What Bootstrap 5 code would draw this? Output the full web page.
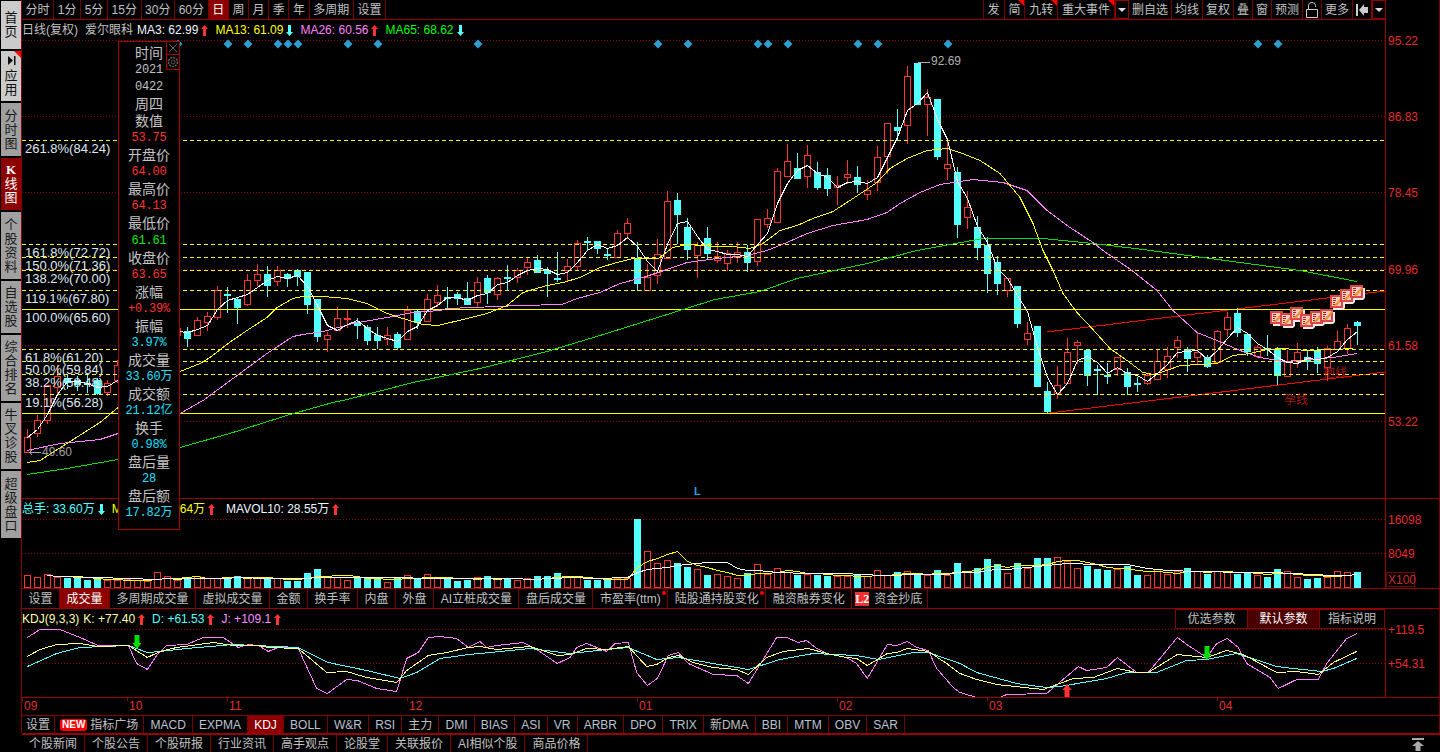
<!DOCTYPE html>
<html lang="zh">
<head>
    <meta charset="UTF-8">
    <title>爱尔眼科 K线图</title>
    <link href="https://cdn.jsdelivr.net/npm/bootstrap@5.3.2/dist/css/bootstrap.min.css" rel="stylesheet">
    <style>
        html, body { height: 100%; overflow: hidden; }
        body {
            background: #000;
            color: #c0c0c0;
            font-family: "Liberation Sans", "Noto Sans CJK SC", sans-serif;
            font-size: 12px;
            line-height: 1;
        }

        /* left rail */
        .side-rail { width: 21px; padding: 1px 0 0 1px; gap: 2px; }
        .rail-btn {
            width: 20px;
            background: #a0a0a0;
            color: #1a1a1a;
            font-size: 13px;
            line-height: 14px;
            position: relative;
            text-align: center;
        }
        .rail-btn > span.rail-text { display: block; width: 14px; word-break: break-all; }
        .rail-btn.rail-light { background: #cbcbcb; color: #111; }
        .rail-btn.rail-on { background: #8c0000; color: #fff; }
        .rail-kay { font-family: "Liberation Serif", serif; font-weight: 700; }
        .rail-home { height: 48px; }
        .rail-app { height: 50px; }
        .rail-time { height: 53px; }
        .rail-kline { height: 52px; }
        .rail-info { height: 67px; }
        .rail-fav { height: 52px; }
        .rail-rank { height: 66px; }
        .rail-diag { height: 66px; }
        .rail-super { height: 67px; }
        .rail-corner {
            position: absolute; top: 0; right: 0;
            border-top: 7px solid #f00; border-left: 7px solid transparent;
        }

        /* main column */
        .main-col { width: 1419px; border-left: 1px solid #800; border-right: 1px solid #700; height: 733px; }
        .top-bar { width: 1364px; height: 20px; border-bottom: 1px solid #900; }
        .tab-strip { display: flex; }
        .tab-cell {
            position: relative;
            display: flex; align-items: center; justify-content: center;
            border-right: 1px solid #700;
            color: #c0c0c0;
            white-space: nowrap;
        }
        .tab-cell.tab-on { background: #8c0000; color: #fff; }
        .strip-top .tab-cell { height: 19px; padding: 0 3.6px; }
        .strip-right .tab-cell { height: 19px; padding: 0 3px; }
        .strip-right .tab-cell.tab-wide { padding: 0 3.9px; }
        .strip-right { border-left: 1px solid #700; }
        .strip-right .tab-cell.tab-drop { border: 1px solid #900; width: 14px; padding: 0; }
        .tab-flag::after {
            content: ""; position: absolute; top: 0; right: 0;
            border-top: 6px solid #f00; border-left: 6px solid transparent;
        }
        .tab-dot::after {
            content: ""; position: absolute; top: 2px; right: 1px;
            width: 4px; height: 4px; border-radius: 50%; background: #f00;
        }
        .down-mark { width: 0; height: 0; border-top: 4px solid #ddd; border-left: 4px solid transparent; border-right: 4px solid transparent; }

        .chart-stack { position: relative; }
        .chart-pane { position: relative; width: 1418px; border-bottom: 1px solid #900; }
        .chart-pane svg, .axis-row svg { display: block; }
        .pane-price { height: 479px; }
        .pane-vol { height: 90px; }
        .pane-kdj { height: 89px; }
        .axis-row { height: 17px; }

        .legend-row { position: absolute; top: 0; left: 0; height: 20px; display: flex; align-items: center; white-space: nowrap; }
        .legend-row > span { display: inline-flex; align-items: center; margin-right: 7px; }
        .legend-row svg { margin-left: 3px; }
        .legend-row > .kdj-head { margin-right: 4px; }
        .legend-row > .vol-cut { margin-left: 58px; }
        .tone-white { color: #f0f4ff; }
        .tone-yellow { color: #ff0; }
        .tone-pink { color: #ff80ff; }
        .tone-green { color: #0f0; }
        .tone-cyan { color: #54ffff; }
        .tone-pale { color: #ffffa8; }
        .tone-lilac { color: #ff90ff; }
        .tone-gray { color: #c0c0c0; }

        /* floating data window */
        .data-tip {
            position: absolute; top: 21px; left: 96px;
            width: 62px; height: 489px;
            background: #000;
            border: 1px solid #a00;
            padding-top: 3px;
            text-align: center;
            line-height: 17px;
            z-index: 5;
        }
        .tip-name { font-size: 14px; color: #c4c4c4; height: 17.06px; }
        .tip-val { font-family: "Liberation Mono", "Noto Sans CJK SC", monospace; font-size: 12px; letter-spacing: -.2px; height: 17.06px; }
        .val-red { color: #ff3232; }
        .val-green { color: #00f000; }
        .val-blue { color: #18e0ff; }
        .tip-tool {
            position: absolute; left: 47px; width: 14px;
            border: 1px solid #a00; background: #000;
            display: flex; align-items: center; justify-content: center;
        }
        .tool-close { top: -1px; height: 14px; }
        .tool-gear { top: 12px; height: 16px; }

        /* tab rows under the charts */
        .strip-ind { height: 20px; border-bottom: 1px solid #900; }
        .strip-ind .tab-cell { height: 19px; padding: 0 6.5px; }
        .param-strip { position: absolute; top: 0; left: 1153px; height: 20px; border: 1px solid #800; border-width: 1px 0 1px 1px; display: flex; }
        .param-strip .tab-cell { width: 72px; height: 18px; border-right: 1px solid #800; }
        .param-strip .tab-cell.param-on { background: #4a0000; color: #fff; }
        .param-strip .tab-cell:last-child { width: 65px; }
        .strip-index { height: 19px; border-top: 1px solid #800; }
        .strip-index .tab-cell { height: 18px; padding: 0 6.1px; color: #b8c2d0; }
        .strip-index .tab-cjk { color: #c0c0c0; }
        .strip-index .tab-cell.tab-on { color: #fff; }
        .strip-index .tab-cell.tab-set { padding: 0 4px; }
        .strip-index .tab-cell.tab-square { padding: 0 5px; }
        .badge-new {
            background: #f00; color: #fff; border-radius: 3px;
            font-size: 10px; font-weight: 700; padding: 1px 2px; margin-right: 3px;
        }
        .badge-ltwo {
            background: #f03030; color: #fff;
            font-family: "Liberation Serif", serif; font-weight: 700; font-size: 12px;
            width: 14px; height: 14px; display: inline-flex; align-items: center; justify-content: center;
            margin-right: 5px;
        }
        .strip-ind .tab-cell.tab-last { padding: 0 5px 0 3px; }
        .news-row { height: 20px; width: 1418px; margin-left: 22px; border-top: 2px solid #900; position: relative; }
        .news-row .tab-cell { height: 18px; padding: 0 7px; }
        .jump-top { position: absolute; top: 3px; right: 16px; }
    </style>
</head>
<body>
<svg width="0" height="0" class="position-absolute">
    <symbol id="arrow-up" viewBox="0 0 7 11"><path d="M3.500 0 7 4H5v7H2V4H0z" fill="currentColor"/></symbol>
    <symbol id="arrow-down" viewBox="0 0 7 11"><path d="M2 0h3v7h2l-3.500 4L0 7h2z" fill="currentColor"/></symbol>
    <symbol id="note-icon" viewBox="0 0 15 15">
        <path d="M3 3h12v10l-2 2H3z" fill="#f4e8e8"/>
        <rect x="0" y="0" width="13" height="13" fill="#dc4444"/>
        <rect x="2" y="2" width="9" height="9" fill="#f8ccc4"/>
        <path d="M3 3.500h3M3 5.500h3M3 7.500h2M3 9.500h2" stroke="#a82020" stroke-width="1"/>
        <path d="M5 11 12.500 2.500" stroke="#e8902c" stroke-width="2" fill="none"/>
    </symbol>
</svg>

<div class="d-flex">
    <nav class="side-rail d-flex flex-column flex-shrink-0">
        <div class="rail-btn rail-light rail-home d-flex align-items-center justify-content-center"><span class="rail-text">首页</span></div>
        <div class="rail-btn rail-light rail-app d-flex flex-column align-items-center justify-content-center">
            <span class="rail-corner"></span>
            <svg width="9" height="9" viewBox="0 0 9 9" class="mb-1"><path d="M1 0 6 4.500 1 9zM7 0h1.500v9H7z" fill="#111"/></svg>
            <span class="rail-text">应用</span>
        </div>
        <div class="rail-btn rail-time d-flex align-items-center justify-content-center"><span class="rail-text">分时图</span></div>
        <div class="rail-btn rail-on rail-kline d-flex align-items-center justify-content-center"><span class="rail-text"><span class="rail-kay">K</span>线图</span></div>
        <div class="rail-btn rail-info d-flex align-items-center justify-content-center"><span class="rail-text">个股资料</span></div>
        <div class="rail-btn rail-fav d-flex align-items-center justify-content-center"><span class="rail-text">自选股</span></div>
        <div class="rail-btn rail-rank d-flex align-items-center justify-content-center"><span class="rail-text">综合排名</span></div>
        <div class="rail-btn rail-diag d-flex align-items-center justify-content-center"><span class="rail-text">牛叉诊股</span></div>
        <div class="rail-btn rail-super d-flex align-items-center justify-content-center"><span class="rail-text">超级盘口</span></div>
    </nav>

    <div class="flex-shrink-0">
        <div class="main-col">
            <div class="top-bar d-flex justify-content-between">
                <div class="tab-strip strip-top">
                    <div class="tab-cell">分时</div><div class="tab-cell">1分</div><div class="tab-cell">5分</div><div class="tab-cell">15分</div><div class="tab-cell">30分</div><div class="tab-cell">60分</div>
                    <div class="tab-cell tab-on">日</div><div class="tab-cell">周</div><div class="tab-cell">月</div><div class="tab-cell">季</div><div class="tab-cell">年</div><div class="tab-cell">多周期</div><div class="tab-cell">设置</div>
                </div>
                <div class="tab-strip strip-right">
                    <div class="tab-cell tab-wide">发</div><div class="tab-cell tab-wide tab-flag">简</div><div class="tab-cell tab-wide tab-flag">九转</div><div class="tab-cell tab-wide tab-flag">重大事件</div>
                    <div class="tab-cell tab-drop"><span class="down-mark"></span></div>
                    <div class="tab-cell">删自选</div><div class="tab-cell">均线</div><div class="tab-cell">复权</div><div class="tab-cell">叠</div><div class="tab-cell">窗</div><div class="tab-cell">预测</div>
                    <div class="tab-cell">
                        <svg width="12" height="16" viewBox="0 0 12 16"><path d="M2.500 7V3.500a3.500 3 0 0 1 7 0V5M.5 7.500h11v8H.5z" fill="none" stroke="#ccc"/></svg>
                    </div>
                    <div class="tab-cell">更多</div>
                    <div class="tab-cell">
                        <svg width="12" height="12" viewBox="0 0 12 12"><path d="M0 0h2v12H0zM3 6l5-6v3h4v6H8v3z" fill="#ccc"/></svg>
                    </div>
                    <div class="tab-cell tab-drop"><span class="down-mark"></span></div>
                </div>
            </div>

            <div class="chart-stack">
                <div class="chart-pane pane-price">
                    <svg id="priceChart" width="1418" height="478" viewBox="22 20 1418 478" shape-rendering="crispEdges"></svg>
                    <div class="legend-row">
                        <span class="tone-gray">日线(复权)</span>
                        <span class="tone-gray me-1">爱尔眼科</span>
                        <span class="tone-white ms-0">MA3: 62.99<svg width="7" height="11" class="val-red"><use href="#arrow-up"/></svg></span>
                        <span class="tone-yellow">MA13: 61.09<svg width="7" height="11" class="tone-cyan"><use href="#arrow-down"/></svg></span>
                        <span class="tone-pink">MA26: 60.56<svg width="7" height="11" class="val-red"><use href="#arrow-up"/></svg></span>
                        <span class="tone-green">MA65: 68.62<svg width="7" height="11" class="tone-cyan"><use href="#arrow-down"/></svg></span>
                    </div>
                </div>
                <div class="chart-pane pane-vol">
                    <svg id="volChart" width="1418" height="89" viewBox="22 499 1418 89" shape-rendering="crispEdges"></svg>
                    <div class="legend-row">
                        <span class="tone-cyan">总手: 33.60万<svg width="7" height="11" class="tone-cyan"><use href="#arrow-down"/></svg></span>
                        <span class="tone-yellow m-0">M</span>
                        <span class="tone-yellow vol-cut">64万<svg width="7" height="11" class="val-red"><use href="#arrow-up"/></svg></span>
                        <span class="tone-white ms-1">MAVOL10: 28.55万<svg width="7" height="11" class="val-red"><use href="#arrow-up"/></svg></span>
                    </div>
                </div>

                <div class="data-tip">
                    <div class="tip-tool tool-close"><svg width="10" height="10" viewBox="0 0 10 10"><path d="M1 1l8 8M9 1 1 9" stroke="#666" fill="none"/></svg></div>
                    <div class="tip-tool tool-gear"><svg width="12" height="12" viewBox="0 0 12 12"><circle cx="6" cy="6" r="4.500" fill="none" stroke="#666" stroke-width="1.500" stroke-dasharray="2 1"/><circle cx="6" cy="6" r="2" fill="none" stroke="#555"/></svg></div>
                    <div class="tip-name">时间</div><div class="tip-val tone-gray">2021</div><div class="tip-val tone-gray">0422</div>
                    <div class="tip-name">周四</div>
                    <div class="tip-name">数值</div><div class="tip-val val-red">53.75</div>
                    <div class="tip-name">开盘价</div><div class="tip-val val-red">64.00</div>
                    <div class="tip-name">最高价</div><div class="tip-val val-red">64.13</div>
                    <div class="tip-name">最低价</div><div class="tip-val val-green">61.61</div>
                    <div class="tip-name">收盘价</div><div class="tip-val val-red">63.65</div>
                    <div class="tip-name">涨幅</div><div class="tip-val val-red">+0.39%</div>
                    <div class="tip-name">振幅</div><div class="tip-val val-blue">3.97%</div>
                    <div class="tip-name">成交量</div><div class="tip-val val-blue">33.60万</div>
                    <div class="tip-name">成交额</div><div class="tip-val val-blue">21.12亿</div>
                    <div class="tip-name">换手</div><div class="tip-val val-blue">0.98%</div>
                    <div class="tip-name">盘后量</div><div class="tip-val val-blue">28</div>
                    <div class="tip-name">盘后额</div><div class="tip-val val-blue">17.82万</div>
                </div>
            </div>

            <div class="tab-strip strip-ind">
                <div class="tab-cell">设置</div><div class="tab-cell tab-on">成交量</div><div class="tab-cell">多周期成交量</div><div class="tab-cell">虚拟成交量</div>
                <div class="tab-cell">金额</div><div class="tab-cell">换手率</div><div class="tab-cell">内盘</div><div class="tab-cell">外盘</div><div class="tab-cell">AI立桩成交量</div><div class="tab-cell">盘后成交量</div>
                <div class="tab-cell tab-dot">市盈率(ttm)</div><div class="tab-cell tab-dot">陆股通持股变化</div><div class="tab-cell">融资融券变化</div>
                <div class="tab-cell tab-last"><span class="badge-ltwo">L2</span>资金抄底</div>
            </div>

            <div class="chart-pane pane-kdj">
                <svg id="kdjChart" width="1418" height="88" viewBox="22 609 1418 88" shape-rendering="crispEdges"></svg>
                <div class="legend-row">
                    <span class="tone-pale kdj-head">KDJ(9,3,3)</span>
                    <span class="tone-pale">K: +77.40<svg width="7" height="11" class="val-red"><use href="#arrow-up"/></svg></span>
                    <span class="tone-cyan">D: +61.53<svg width="7" height="11" class="val-red"><use href="#arrow-up"/></svg></span>
                    <span class="tone-lilac">J: +109.1<svg width="7" height="11" class="val-red"><use href="#arrow-up"/></svg></span>
                </div>
                <div class="param-strip">
                    <div class="tab-cell">优选参数</div><div class="tab-cell param-on">默认参数</div><div class="tab-cell">指标说明</div>
                </div>
            </div>

            <div class="axis-row">
                <svg id="axisChart" width="1418" height="17" viewBox="22 698 1418 17" shape-rendering="crispEdges"></svg>
            </div>

            <div class="tab-strip strip-index">
                <div class="tab-cell tab-cjk tab-set">设置</div>
                <div class="tab-cell tab-cjk tab-square"><span class="badge-new">NEW</span>指标广场</div>
                <div class="tab-cell">MACD</div><div class="tab-cell">EXPMA</div><div class="tab-cell tab-on">KDJ</div><div class="tab-cell">BOLL</div><div class="tab-cell">W&amp;R</div><div class="tab-cell">RSI</div><div class="tab-cell tab-cjk">主力</div><div class="tab-cell">DMI</div>
                <div class="tab-cell">BIAS</div><div class="tab-cell">ASI</div><div class="tab-cell">VR</div><div class="tab-cell">ARBR</div><div class="tab-cell">DPO</div><div class="tab-cell">TRIX</div><div class="tab-cell tab-cjk">新DMA</div><div class="tab-cell">BBI</div><div class="tab-cell">MTM</div><div class="tab-cell">OBV</div><div class="tab-cell">SAR</div>
            </div>
        </div>
    </div>
</div>
<div class="news-row tab-strip">
    <div class="tab-cell">个股新闻</div><div class="tab-cell">个股公告</div><div class="tab-cell">个股研报</div><div class="tab-cell">行业资讯</div><div class="tab-cell">高手观点</div><div class="tab-cell">论股堂</div><div class="tab-cell">关联报价</div><div class="tab-cell">AI相似个股</div><div class="tab-cell">商品价格</div>
    <svg class="jump-top" width="12" height="13" viewBox="0 0 12 13"><path d="M0 0h12v2H0zM6 3l6 5H8.500v5h-5V8H0z" fill="#aaa"/></svg>
</div>

<script src="https://cdn.jsdelivr.net/npm/bootstrap@5.3.2/dist/js/bootstrap.bundle.min.js"></script>
<script>
    const RED = '#ff3232', CYAN = '#54ffff';

    // kind, high, body top, body bottom, low (all in page pixels), one candle every 10px from x=27.5
    const candles = [
        ['r',429,437,452,452],['r',415,420,433,436],['r',385,385,420,423],['r',365,376,387,395],['c',374,378,382,388],
        ['c',376,380,384,390],['c',375,383,383,392],['c',378,380,393,394],['r',380,383,392,395],['r',360,365,380,382],
        ['r',350,355,368,372],['r',345,350,360,366],['r',340,345,355,360],['r',330,335,352,356],['r',325,330,338,345],['r',322,328,335,340],
        ['c',327,331,338,346],['r',317,320,335,335],['r',312,316,322,330],['r',286,290,317,319],['c',287,294,294,312],
        ['c',298,299,307,323],['r',274,280,304,305],['r',264,274,280,285],['c',266,274,285,296],['r',266,270,281,285],
        ['c',273,274,278,286],['c',269,270,276,285],['c',272,272,304,313],['c',299,299,336,341],['r',332,335,339,351],
        ['r',307,318,330,330],['r',310,318,318,327],['c',318,322,325,338],['c',325,327,340,344],['c',327,335,340,348],
        ['r',327,335,339,344],['c',332,334,347,349],['r',306,310,339,339],['c',310,311,322,328],['r',294,299,321,321],
        ['r',285,295,302,306],['c',287,297,297,307],['c',292,294,298,304],['c',282,298,304,304],['r',277,282,302,306],
        ['c',275,278,292,303],['r',277,278,294,299],['c',265,277,277,289],['r',268,270,277,282],['r',258,262,267,274],
        ['c',255,260,272,272],['c',267,270,273,296],['c',252,278,278,281],['r',259,266,270,281],['r',240,243,266,269],
        ['c',237,241,241,249],['c',241,241,248,253],['c',248,254,254,259],['r',230,233,257,257],['r',218,223,233,238],
        ['c',242,259,283,290],['r',264,277,290,290],['r',239,254,275,283],['r',191,201,258,258],['c',193,200,214,243],
        ['c',218,227,249,259],['r',242,245,255,277],['c',227,238,253,259],['r',242,256,260,262],['r',250,253,263,270],
        ['r',242,252,257,262],['c',245,252,262,271],['r',219,219,261,265],['r',209,218,224,227],['r',168,171,222,222],
        ['r',144,161,176,176],['c',153,168,178,178],['r',145,155,176,187],['c',162,172,187,189],['c',168,175,188,195],
        ['r',176,185,187,204],['r',160,174,177,183],['c',166,177,184,192],['r',180,190,194,199],['r',146,157,182,190],
        ['r',123,123,156,173],['c',109,127,130,140],['r',66,76,125,143],['c',63,63,104,104],['r',89,97,104,135],
        ['c',99,99,156,159],['r',140,164,168,179],['c',167,172,224,237],['r',191,207,217,228],['c',216,227,247,259],
        ['c',237,245,273,292],['c',256,262,283,294],['r',278,278,290,296],['c',286,286,323,327],['r',322,333,339,344],
        ['c',326,326,386,386],['c',382,391,411,412],['r',366,385,393,398],['r',338,352,383,383],['r',340,342,345,363],
        ['c',350,350,375,385],['c',365,369,369,394],['c',363,375,375,383],['r',357,357,369,375],['c',368,372,386,394],
        ['c',377,383,383,391],['r',373,375,383,384],['r',349,361,379,379],['r',347,356,369,377],['r',336,340,347,357],
        ['c',347,349,358,371],['r',332,352,357,364],['c',355,357,366,367],['r',330,331,362,363],['r',312,317,329,336],
        ['c',308,313,332,336],['c',334,334,351,355],['r',345,347,356,357],['c',335,348,348,355],['c',347,349,375,384],
        ['r',350,362,376,376],['r',343,352,361,367],['c',350,357,361,369],['c',347,350,363,372],['r',346,348,367,380],
        ['r',331,341,349,349],['r',324,328,348,353],['c',321,322,325,344]
    ];

    const volTops = [
        225,232,222,230,235,230,240,236,240,240,238,240,243,217,228,240,232,228,235,235,232,228,233,234,234,235,242,242,218,207,227,232,240,232,234,236,245,232,226,236,222,232,234,243,240,232,
        228,237,237,241,235,228,228,219,232,232,240,240,235,233,233,57,154,190,181,189,201,207,225,222,229,235,219,193,222,205,215,225,222,225,228,228,228,226,229,211,225,216,214,225,225,210,226,189,
        213,205,177,192,219,189,204,174,174,171,183,204,198,207,210,207,198,225,225,207,222,213,204,214,222,214,214,222,215,225,231,207,214,232,237,234,230,214,217,216
    ].map(v => 500 + v / 3);

    const cx = k => 27.5 + 10 * k;
    const xy = pts => pts.map(p => p[0] + ',' + (Math.round(p[1]) + .5)).join(' ');
    const poly = (pts, color, w) => `<polyline points="${xy(pts)}" fill="none" stroke="${color}" stroke-width="${w || 1}"/>`;
    const hline = (y, x1, x2, color, dash) => `<line x1="${x1}" x2="${x2}" y1="${y + .5}" y2="${y + .5}" stroke="${color}"${dash ? ` stroke-dasharray="${dash}"` : ''}/>`;
    const label = (x, y, txt, color, size, extra) => `<text x="${x}" y="${y}" fill="${color}" font-size="${size || 12}" dominant-baseline="central" shape-rendering="auto" ${extra || ''}>${txt}</text>`;
    const pairs = flat => { const out = []; for (let i = 0; i < flat.length; i += 2) out.push([flat[i], flat[i + 1]]); return out; };

    // price pane -------------------------------------------------------
    let price = '';
    [40, 116, 192, 269, 345, 421].forEach(y => { price += hline(y, 22, 1385, '#8a0000', '1 2'); });
    price += '<line x1="1385.5" x2="1385.5" y1="20" y2="498" stroke="#900"/>';

    // channel lines
    price += `<line x1="1047" y1="332" x2="1385" y2="291" stroke="#f00"/>`;
    price += `<line x1="1050" y1="413" x2="1385" y2="372" stroke="#f00"/>`;

    candles.forEach((c, k) => {
        const x = cx(k), col = c[0] === 'r' ? RED : CYAN;
        price += `<line x1="${x}" x2="${x}" y1="${c[1]}" y2="${c[4] + 1}" stroke="${col}"/>`;
        if (c[2] === c[3]) {
            price += `<rect x="${x - 3.5}" y="${c[2]}" width="7" height="2" fill="${col}"/>`;
        } else if (c[0] === 'r') {
            price += `<rect x="${x - 3}" y="${c[2] + .5}" width="6" height="${c[3] - c[2]}" fill="#000" stroke="${col}"/>`;
        } else {
            price += `<rect x="${x - 3.5}" y="${c[2]}" width="7" height="${c[3] - c[2] + 1}" fill="${col}"/>`;
        }
    });

    // golden section lines go over the candles
    [140, 244, 257, 270, 290, 349, 361, 374, 394].forEach(y => { price += hline(y, 22, 1385, '#ff0', '4 3'); });
    [309, 413].forEach(y => { price += hline(y, 22, 1385, '#ff0'); });

    const ma13 = pairs([27,462,40,460,67,443,100,422,118,407,180,371,200,363,210,357,228,343,247,330,267,317,277,307,293,298,302,296,323,296,347,298,367,303,387,313,403,318,423,324,438,325,463,319,487,313,507,305,523,292,547,285,563,282,580,277,600,267,617,262,633,258,658,258,673,247,687,244,717,246,733,246,750,248,763,243,780,230,797,225,813,218,833,211,853,198,877,182,890,168,907,158,927,150,947,148,960,152,980,160,1000,173,1020,197,1033,223,1043,250,1053,270,1063,293,1077,312,1092,328,1110,348,1127,360,1143,372,1153,374,1167,370,1180,365,1200,364,1217,363,1233,355,1250,353,1267,349,1283,348,1307,350,1333,349,1353,348]);
    const ma26 = pairs([27,450,60,443,100,439,118,433,180,413,203,400,233,378,267,353,293,336,303,334,323,331,353,323,387,317,413,312,440,310,447,308,473,307,520,305,562,304,577,298,600,292,620,283,643,277,667,269,687,262,717,258,747,255,767,250,787,242,807,233,833,225,867,219,887,212,900,203,920,192,940,184,953,182,973,179,1003,182,1027,190,1047,210,1070,227,1093,242,1103,250,1132,270,1157,290,1173,310,1197,332,1217,340,1240,350,1260,357,1283,361,1300,360,1333,357,1357,353]);
    const ma65 = pairs([27,474,67,468,118,459,180,447,233,432,290,414,333,402,347,399,413,382,480,368,547,351,600,335,715,299,760,291,797,278,867,263,917,250,950,244,983,238,1003,238,1043,238,1093,243,1143,249,1300,270,1357,281]);
    const closes = candles.map(c => c[0] === 'r' ? c[2] : c[3]);
    const ma3 = closes.map((_, k) => {
        const from = Math.max(0, k - 2), win = closes.slice(from, k + 1);
        return [cx(k), win.reduce((a, b) => a + b, 0) / win.length];
    });
    price += poly(ma65, '#00e000') + poly(ma26, '#ff80ff') + poly(ma13, '#ffff00') + poly(ma3, '#ffffff');

    // pattern notes
    [[1270,311],[1280,313],[1290,307],[1300,314],[1310,311],[1320,309],[1330,295],[1340,289],[1350,285]].forEach(p => {
        price += `<use href="#note-icon" x="${p[0]}" y="${p[1]}" width="15" height="15" shape-rendering="auto"/>`;
    });

    // signal diamonds
    [178,228,248,278,288,298,348,378,478,658,688,758,768,788,858,878,948,1258,1278].forEach(x => {
        price += `<path d="M${x} 39.500l4.500 4.500-4.500 4.500-4.500-4.500z" fill="#2a9fd0" shape-rendering="auto"/>`;
    });

    const fib = [['261.8%(84.24)',148],['161.8%(72.72)',252],['150.0%(71.36)',265],['138.2%(70.00)',278],['119.1%(67.80)',298],['100.0%(65.60)',317],['61.8%(61.20)',357],['50.0%(59.84)',369],['38.2%(58.48)',382],['19.1%(56.28)',402]];
    fib.forEach(f => { price += label(25, f[1], f[0], '#dfe8f2', 13); });

    [['95.22',40],['86.83',116],['78.45',192],['69.96',269],['61.58',345],['53.22',421]].forEach(a => { price += label(1388, a[1] + 1, a[0], '#e62a2a'); });

    price += '<line x1="918" y1="62.500" x2="930" y2="62.500" stroke="#aaa"/>' + label(931, 61, '92.69', '#b0b0b0');
    price += '<path d="M29 452.500h12M29 452.500l3-2M29 452.500l3 2" stroke="#aaa" fill="none"/>' + label(42, 452, '49.60', '#a0a0a0');
    price += label(1323, 373, '抱线', '#a81818') + label(1284, 400, '孕线', '#a81818');
    price += label(694, 491, 'L', '#2a9fe0', 11, 'font-weight="700"');
    document.getElementById('priceChart').innerHTML = price;

    // volume pane ------------------------------------------------------
    let vol = '';
    [519, 553].forEach(y => { vol += hline(y, 22, 1385, '#8a0000', '1 2'); });
    vol += '<line x1="1385.5" x2="1385.5" y1="499" y2="588" stroke="#900"/>';
    volTops.forEach((t, k) => {
        const x = cx(k), top = Math.round(t);
        if (candles[k][0] === 'r') {
            vol += `<rect x="${x - 3}" y="${top + .5}" width="6" height="${587 - top}" fill="#000" stroke="${RED}"/>`;
        } else {
            vol += `<rect x="${x - 3.5}" y="${top}" width="7" height="${588 - top}" fill="${CYAN}"/>`;
        }
    });
    const volAvg = n => volTops.map((_, k) => {
        const win = volTops.slice(Math.max(0, k - n + 1), k + 1);
        return [cx(k), 587 - win.reduce((a, b) => a + (587 - b), 0) / win.length];
    }).slice(2);
    vol += poly(volAvg(5), '#ffff00', 1) + poly(volAvg(10), '#ffffff', 1);
    vol += label(1388, 520, '16098', '#e62a2a') + label(1388, 554, '8049', '#e62a2a');
    vol += '<rect x="1386.500" y="572.500" width="28" height="14" fill="none" stroke="#700"/>' + label(1388, 580, 'X100', '#d02a2a');
    document.getElementById('volChart').innerHTML = vol;

    // kdj pane, points read off the three stretches of the curve ------------------
    const stretch = (x0, flat) => pairs(flat).map(p => [x0 + p[0] / 3, 500 + p[1] / 3]);
    const jLine = [].concat(
        stretch(0, [82,410,120,388,180,388,240,410,295,435,385,435,410,490,442,508,470,465,500,436,560,432,610,412,670,412,715,440,745,432,775,435,805,452,835,440,895,443,950,565,982,580,1040,538,1072,540,1130,565,1190,572,1220,475,1255,457,1285,412,1320,408,1370,415,1405,440,1440,422]),
        stretch(480, [20,440,50,435,130,425,170,448,232,490,270,470,290,440,320,428,380,452,405,430,445,425,470,515,502,555,532,535,565,465,595,455,625,490,700,522,770,525,805,550,890,410,920,410,955,427,980,420,1010,445,1040,458,1100,470,1130,490,1162,535,1222,433,1250,435,1282,422,1310,442,1345,450,1370,505,1420,560,1440,575]),
        stretch(960, [50,590,120,590,140,582,260,580,355,498,380,510,440,500,472,470,530,516,565,517,652,412,685,435,740,470,770,430,802,415,835,440,860,490,930,530,955,563,1010,537,1075,538,1100,490,1160,415,1190,400])
    );
    const kLine = [].concat(
        stretch(0, [82,468,120,448,170,433,240,430,295,437,385,435,442,472,480,452,530,440,640,427,700,435,775,435,805,440,895,443,980,515,1040,512,1100,530,1190,545,1220,510,1285,465,1340,455,1405,440,1440,437]),
        stretch(480, [50,447,150,437,232,466,270,462,320,445,380,448,445,437,500,498,530,493,565,470,595,465,640,485,700,500,770,508,805,523,860,470,910,452,985,445,1040,460,1100,470,1130,475,1162,495,1222,458,1250,457,1282,445,1345,453,1400,490,1440,520]),
        stretch(960, [50,537,110,553,250,568,340,533,400,530,472,505,530,516,565,517,652,463,740,470,800,450,850,463,900,490,950,517,1010,512,1075,522,1120,485,1190,452])
    );
    const dLine = [].concat(
        stretch(0, [82,498,170,458,240,440,385,435,442,455,480,453,560,445,700,432,895,440,985,485,1100,510,1200,533,1250,515,1320,475,1405,462,1440,458]),
        stretch(480, [150,443,270,458,380,447,445,442,530,478,595,470,700,488,805,508,900,478,1000,458,1130,465,1195,478,1300,455,1345,455,1440,490]),
        stretch(960, [50,515,170,548,260,560,300,558,440,535,500,517,590,515,680,480,740,477,830,458,950,498,1000,505,1085,512,1120,505,1190,475])
    );
    let kdj = '';
    [629, 663].forEach(y => { kdj += hline(y, 22, 1385, '#8a0000', '1 2'); });
    kdj += '<line x1="1385.5" x2="1385.5" y1="628" y2="697" stroke="#900"/>';
    kdj += poly(jLine, '#ff80ff') + poly(dLine, '#54ffff') + poly(kLine, '#ffff80');
    const downMark = (x, y) => `<path d="M${x - 2.5} ${y}h5v8h2l-4.500 6-4.500-6h2z" fill="#00e000" shape-rendering="auto"/>`;
    kdj += downMark(137, 635) + downMark(1207, 646);
    kdj += `<path d="M1067 684l4.500 6h-2v7h-5v-7h-2z" fill="#ff3232" shape-rendering="auto"/>`;
    kdj += label(1388, 630, '+119.5', '#e62a2a') + label(1388, 664, '+54.31', '#e62a2a');
    document.getElementById('kdjChart').innerHTML = kdj;

    // month axis
    let axis = '';
    [[22,'09'],[127,'10'],[227,'11'],[407,'12'],[637,'01'],[837,'02'],[987,'03'],[1217,'04']].forEach(m => {
        axis += `<line x1="${m[0] + .5}" x2="${m[0] + .5}" y1="698" y2="701" stroke="#900"/>`;
        axis += label(m[0] + 2, 706, m[1], '#e03030');
    });
    document.getElementById('axisChart').innerHTML = axis;
</script>
</body>
</html>
